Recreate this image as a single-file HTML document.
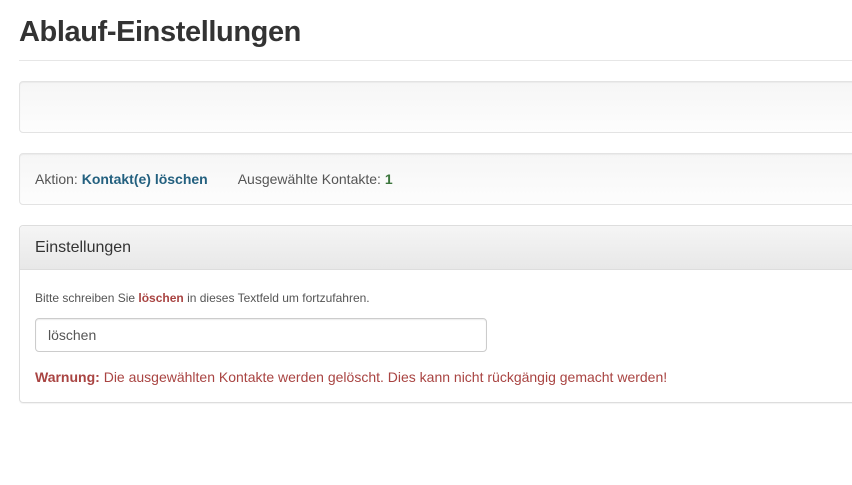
<!DOCTYPE html>
<html><head><meta charset="utf-8"><style>
body{margin:0;background:#fff;font-family:"Liberation Sans",Arial,sans-serif;color:#333;width:852px;height:485px;overflow:hidden;position:relative}
.abs{position:absolute}
h1{position:absolute;left:19px;top:16px;margin:0;font-size:29px;font-weight:bold;color:#333;letter-spacing:-0.4px}
.hr{left:19px;top:60px;width:840px;height:1px;background:#e6e6e6}
.well{left:19px;width:845px;border:1px solid #e3e3e3;border-radius:4px;background:linear-gradient(#f6f6f6,#fdfdfd);box-shadow:inset 0 1px 1px rgba(0,0,0,.05)}
.panel{left:19px;top:225px;width:845px;height:176px;border:1px solid #ddd;border-radius:4px;box-shadow:0 1px 1px rgba(0,0,0,.05)}
.ph{height:43px;background:linear-gradient(#f5f5f5,#e8e8e8);border-bottom:1px solid #ddd;border-radius:4px 4px 0 0;font-size:16px;line-height:44px;padding-left:15px;color:#333}
</style></head><body>
<h1>Ablauf-Einstellungen</h1>
<div class="abs hr"></div>
<div class="abs well" style="top:81px;height:50px"></div>
<div class="abs well" style="top:153px;height:50px"></div>
<div class="abs" style="left:35px;top:171px;font-size:14px;color:#555">Aktion: <b style="color:#23607f">Kontakt(e) löschen</b><span style="margin-left:30px">Ausgewählte Kontakte: <b style="color:#3c763d">1</b></span></div>
<div class="abs panel"><div class="ph">Einstellungen</div></div>
<div class="abs" style="left:35px;top:291px;font-size:12px;color:#555">Bitte schreiben Sie <b style="color:#a94442">löschen</b> in dieses Textfeld um fortzufahren.</div>
<div class="abs" style="left:35px;top:318px;width:450px;height:32px;border:1px solid #ccc;border-radius:4px;box-shadow:inset 0 1px 1px rgba(0,0,0,.075);font-size:14px;line-height:32px;padding-left:0"><span style="margin-left:12px;color:#555">löschen</span></div>
<div class="abs" style="left:35px;top:369px;font-size:14px;color:#a94442"><b>Warnung:</b> Die ausgewählten Kontakte werden gelöscht. Dies kann nicht rückgängig gemacht werden!</div>
</body></html>
